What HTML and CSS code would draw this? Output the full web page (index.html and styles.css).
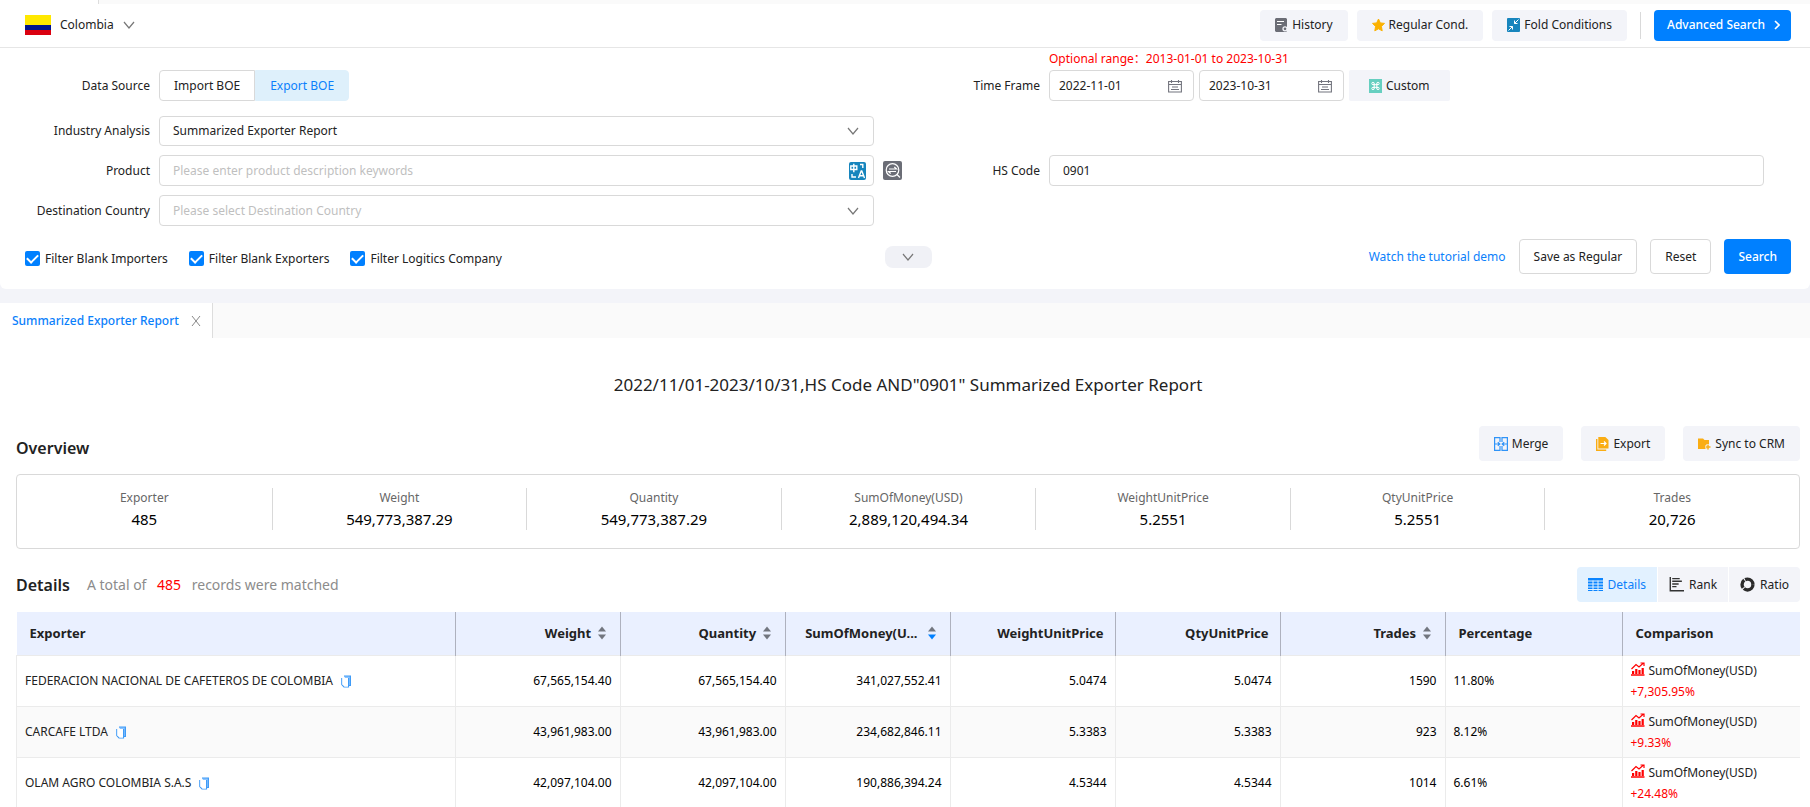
FILE: index.html
```html
<!DOCTYPE html>
<html lang="en">
<head>
<meta charset="utf-8">
<title>Summarized Exporter Report</title>
<link rel="stylesheet" href="styles.css">
</head>
<body>
<svg class="defs" aria-hidden="true">
  <symbol id="chev" viewBox="0 0 12 12"><path d="M1 3l5 6 5-6" fill="none" stroke="#777" stroke-width="1.2"/></symbol>
  <symbol id="cal" viewBox="0 0 14 14"><path d="M.6 2.500h12.800v10.500H.6zM.6 5.500h12.800M3.500 1v3M10.500 1v3M4 8h6M3 10.500h8" fill="none" stroke="#73757e" stroke-width="1.100"/></symbol>
  <symbol id="copy" viewBox="0 0 10 13"><path d="M3 1h6.400v9.500H8z" fill="#8cc4ff"/><path d="M.8 3v6.500L3 12h4.500V3M3 1h6.400v9.500H7.500" fill="none" stroke="#3f9bf7" stroke-width="1.200"/><path d="M1.400 3H7v8.400H3.500L1.400 9.300z" fill="#fff"/></symbol>
  <symbol id="sort" viewBox="0 0 8 14"><path d="M0 5.500l4-5 4 5z" fill="#72767f"/><path d="M0 8.500l4 5 4-5z"/></symbol>
  <symbol id="trend" viewBox="0 0 14 14"><path d="M0 13h13.500" stroke="#f00" stroke-width="1.500"/><path d="M.5 7l4.500-4.500 3 2.500 4.500-4M9.500 1h3.500v3" fill="none" stroke="#f00" stroke-width="1.200"/><path d="M1 9h2.200v3H1zM4.200 7h2.200v5H4.200zM7.400 8h2.200v4H7.400zM10.600 6h2.200v6h-2.200z" fill="#f00"/></symbol>
</svg>

<div class="strip"><div class="strip-tab"></div></div>

<header class="topbar">
  <button class="country" type="button">
    <svg class="flag" viewBox="0 0 26 20"><path fill="#ffe800" d="M0 0h26v10H0z"/><path fill="#00148e" d="M0 10h26v5H0z"/><path fill="#da0010" d="M0 15h26v5H0z"/></svg>
    <span>Colombia</span>
    <svg class="chev"><use href="#chev"/></svg>
  </button>
  <div class="top-actions">
    <button class="soft" type="button"><svg class="ic" viewBox="0 0 13 14"><path fill="#6b6d76" d="M0 1l1-1h10l1 1v12l-1 1H1l-1-1z"/><path d="M2 3.500h7M2 6.500h4.500" stroke="#fff"/><circle cx="10" cy="10.800" r="2" fill="#6b6d76" stroke="#f3f4f9" stroke-width="1.300"/></svg>History</button>
    <button class="soft" type="button"><svg class="ic" viewBox="0 0 13 14"><path fill="#fbb100" stroke="#fbb100" stroke-linejoin="round" d="M6.500 1l1.800 3.900 4.200.5-3.100 3 .8 4.400-3.700-2-3.700 2 .8-4.400-3.100-3 4.200-.5z"/></svg>Regular Cond.</button>
    <button class="soft" type="button"><svg class="ic" viewBox="0 0 13 14"><rect width="13" height="14" rx="1" fill="#1785bd"/><path d="M11.500 1.500l-4 4M7.500 2.500v3h3M1.500 12.500l4-4M2.500 8.500h3v3" fill="none" stroke="#fff"/></svg>Fold Conditions</button>
    <span class="divider"></span>
    <button class="primary advanced" type="button">Advanced Search <svg class="arrow" viewBox="0 0 6 10"><path d="M1 1l4 4-4 4" fill="none" stroke="#fff" stroke-width="1.600"/></svg></button>
  </div>
</header>

<form class="filters" onsubmit="return false">
  <div class="grid">
    <div class="field field-top">
      <span class="label" id="ds">Data Source</span>
      <div class="toggle" role="group" aria-labelledby="ds"><button type="button">Import BOE</button><button type="button" class="on">Export BOE</button></div>
    </div>
    <div class="field field-top">
      <label class="label" for="from">Time Frame</label>
      <div class="dates">
        <span class="hint">Optional range：2013-01-01 to 2023-10-31</span>
        <span class="box date"><input id="from" value="2022-11-01"><svg class="cal"><use href="#cal"/></svg></span>
        <span class="box date"><input aria-label="Time Frame end" value="2023-10-31"><svg class="cal"><use href="#cal"/></svg></span>
        <button class="soft custom" type="button"><svg class="ic" viewBox="0 0 13 14"><rect width="13" height="14" fill="#66cfc0"/><g fill="none" stroke="#fff"><circle cx="4" cy="4.500" r="1.200"/><circle cx="9" cy="4.500" r="1.200"/><circle cx="4" cy="9.500" r="1.200"/><circle cx="9" cy="9.500" r="1.200"/><path d="M5.200 4.500v5M7.800 4.500v5M4 5.700h5M4 8.300h5"/></g></svg>Custom</button>
      </div>
    </div>
    <div class="field wide">
      <label class="label" for="ia">Industry Analysis</label>
      <span class="box low"><select id="ia"><option>Summarized Exporter Report</option></select><svg class="chev"><use href="#chev"/></svg></span>
    </div>
    <div class="field wide">
      <label class="label" for="prod">Product</label>
      <span class="box with-tool"><input id="prod" placeholder="Please enter product description keywords"><svg class="tr" viewBox="0 0 17 18"><rect width="17" height="18" rx="2" fill="#1785bd"/><path d="M1.800 4h6v3.500h-6zM4.800 1.800v8.400M11 2.500h2.800v3.500M3 12v3h4M9.500 16l2.700-7h.6l2.700 7M10.500 13.800h4" fill="none" stroke="#fff" stroke-width="1.400"/></svg></span>
      <button class="lookup" type="button" aria-label="Product lookup"><svg viewBox="0 0 19 19"><rect width="19" height="19" rx="2" fill="#6b6d76"/><circle cx="9.500" cy="9" r="6.300" fill="none" stroke="#fff" stroke-width="1.200"/><path d="M6 8h7.500l-2.200-2M13 10.500H5.500l2.200 2M14 13.500l3 3" fill="none" stroke="#fff" stroke-width="1.200"/></svg></button>
    </div>
    <div class="field">
      <label class="label" for="hs">HS Code</label>
      <span class="box"><input id="hs" value="0901"></span>
    </div>
    <div class="field">
      <label class="label" for="dest">Destination Country</label>
      <span class="box"><select id="dest" class="empty"><option>Please select Destination Country</option></select><svg class="chev"><use href="#chev"/></svg></span>
    </div>
  </div>
  <div class="filter-foot">
    <div class="checks">
      <label><input type="checkbox" checked>Filter Blank Importers</label>
      <label><input type="checkbox" checked>Filter Blank Exporters</label>
      <label><input type="checkbox" checked>Filter Logitics Company</label>
    </div>
    <button class="more" type="button" aria-label="Show more conditions"><svg class="chev"><use href="#chev"/></svg></button>
    <div class="submit">
      <a href="#">Watch the tutorial demo</a>
      <button class="outline" type="button">Save as Regular</button>
      <button class="outline" type="button">Reset</button>
      <button class="primary search" type="submit">Search</button>
    </div>
  </div>
</form>

<nav class="tabs"><div class="tab"><a href="#">Summarized Exporter Report</a><button type="button" aria-label="Close tab"><svg viewBox="0 0 10 10"><path d="M1 0l8 10M9 0L1 10" stroke="#888" fill="none"/></svg></button></div></nav>

<main class="report">
  <h1>2022/11/01-2023/10/31,HS Code AND"0901" Summarized Exporter Report</h1>
  <div class="bar">
    <h2 class="overview">Overview</h2>
    <div class="bar-actions">
      <button class="soft tall" type="button"><svg class="ic wide-ic" viewBox="0 0 14 14"><path d="M6 5V.6H.6v12.800H6V9M8 5V.6h5.400v12.800H8V9M.6 7h5M13.400 7h-5M3.800 5.300L5.800 7l-2 1.700M10.200 5.300L8.200 7l2 1.700" fill="none" stroke="#2f93f8" stroke-width="1.200"/></svg>Merge</button>
      <button class="soft tall" type="button"><svg class="ic" viewBox="0 0 13 14"><path d="M.7 2v11.300h9.500" fill="none" stroke="#faad14" stroke-width="1.400"/><path d="M2.300 0h7L12.500 3v8.500H2.300z" fill="#faad14"/><path d="M4.500 6.500H10M8 4.500l2 2-2 2" fill="none" stroke="#fff" stroke-width="1.200"/></svg>Export</button>
      <button class="soft tall" type="button"><svg class="ic" viewBox="0 0 13 14"><path d="M0 1.500h5L6.500 3H11v9H0z" fill="#faad14"/><path d="M7 10h6M10 7v6" stroke="#f3f4f9" stroke-width="3"/><path d="M7.500 10h5M10 7.500v5" stroke="#faad14" stroke-width="1.500"/></svg>Sync to CRM</button>
    </div>
  </div>
  <dl class="stats">
    <div><dt>Exporter</dt><dd>485</dd></div>
    <div><dt>Weight</dt><dd>549,773,387.29</dd></div>
    <div><dt>Quantity</dt><dd>549,773,387.29</dd></div>
    <div><dt>SumOfMoney(USD)</dt><dd>2,889,120,494.34</dd></div>
    <div><dt>WeightUnitPrice</dt><dd>5.2551</dd></div>
    <div><dt>QtyUnitPrice</dt><dd>5.2551</dd></div>
    <div><dt>Trades</dt><dd>20,726</dd></div>
  </dl>
  <div class="bar details">
    <h2>Details</h2>
    <p>A total of <b>485</b> records were matched</p>
    <div class="views">
      <button type="button" class="on"><svg viewBox="0 0 15 14"><path d="M0 .5h15v13H0z" fill="#0b84ff"/><path d="M0 3.500h15M0 6.500h15M0 9.500h15M0 12h15M5 3v11M10 3v11" stroke="#e2f1ff"/></svg>Details</button>
      <button type="button"><svg viewBox="0 0 14 14"><path d="M1.200 0v12.800H14M3 1.500h7M3 4h9M3 6.500h6M3 9h4" fill="none" stroke="#333" stroke-width="1.300"/></svg>Rank</button>
      <button type="button"><svg viewBox="0 0 16 16"><circle cx="8" cy="8" r="5.800" fill="none" stroke="#2b2b2b" stroke-width="3.600" stroke-dasharray="13 1 9 1 11.400 1"/></svg>Ratio</button>
    </div>
  </div>
  <table>
    <colgroup><col><col class="c-num"><col class="c-num"><col class="c-num"><col class="c-num"><col class="c-num"><col class="c-num"><col class="c-pct"><col class="c-cmp"></colgroup>
    <thead><tr>
      <th>Exporter</th>
      <th class="n s">Weight <svg class="sort"><use href="#sort"/></svg></th>
      <th class="n s">Quantity <svg class="sort"><use href="#sort"/></svg></th>
      <th class="n s">SumOfMoney(U...<svg class="sort desc"><use href="#sort"/></svg></th>
      <th class="n">WeightUnitPrice</th>
      <th class="n">QtyUnitPrice</th>
      <th class="n s">Trades <svg class="sort"><use href="#sort"/></svg></th>
      <th>Percentage</th>
      <th>Comparison</th>
    </tr></thead>
    <tbody>
      <tr><td class="name">FEDERACION NACIONAL DE CAFETEROS DE COLOMBIA<svg class="copy"><use href="#copy"/></svg></td><td class="n">67,565,154.40</td><td class="n">67,565,154.40</td><td class="n">341,027,552.41</td><td class="n">5.0474</td><td class="n">5.0474</td><td class="n">1590</td><td>11.80%</td><td class="cmp"><svg><use href="#trend"/></svg>SumOfMoney(USD)<em>+7,305.95%</em></td></tr>
      <tr><td class="name">CARCAFE LTDA<svg class="copy"><use href="#copy"/></svg></td><td class="n">43,961,983.00</td><td class="n">43,961,983.00</td><td class="n">234,682,846.11</td><td class="n">5.3383</td><td class="n">5.3383</td><td class="n">923</td><td>8.12%</td><td class="cmp"><svg><use href="#trend"/></svg>SumOfMoney(USD)<em>+9.33%</em></td></tr>
      <tr><td class="name">OLAM AGRO COLOMBIA S.A.S<svg class="copy"><use href="#copy"/></svg></td><td class="n">42,097,104.00</td><td class="n">42,097,104.00</td><td class="n">190,886,394.24</td><td class="n">4.5344</td><td class="n">4.5344</td><td class="n">1014</td><td>6.61%</td><td class="cmp"><svg><use href="#trend"/></svg>SumOfMoney(USD)<em>+24.48%</em></td></tr>
    </tbody>
  </table>
</main>
</body>
</html>
```
FILE: styles.css
```css
* { box-sizing: border-box; }
html { background: #fff; scrollbar-width: none; }
body { margin: 0; background: #f3f4f9; color: #222; font: 12px/20px "Noto Sans", "Noto Sans CJK SC", sans-serif; }
button, input, select { font: inherit; color: inherit; margin: 0; }
button { border: 0; background: none; padding: 0; white-space: nowrap; }
a { color: #0b80fb; text-decoration: none; }
svg { display: block; flex: none; }
.defs { position: absolute; width: 0; height: 0; }

.strip { height: 4px; background: #fafafa; }
.strip-tab { width: 99px; height: 4px; background: #fff; border-right: 1px solid #ddd; }

.topbar { display: flex; justify-content: space-between; align-items: center; height: 44px; padding: 1px 19px 2px 25px; background: #fff; border-bottom: 1px solid #e6e6e6; }
.country { display: flex; align-items: center; gap: 9px; }
.flag { width: 26px; height: 20px; }
.chev { width: 12px; height: 12px; }
.top-actions { display: flex; align-items: center; gap: 9px; }
.soft { display: inline-flex; align-items: center; gap: 4px; height: 31px; padding: 0 15px; background: #f3f4f9; border-radius: 4px; }
.ic { width: 13px; height: 14px; }
.wide-ic { width: 14px; }
.divider { width: 1px; height: 27px; margin: 0 4px; background: #d9d9d9; }
.primary { background: #0080ff; color: #fff; border-radius: 4px; }
.advanced { display: flex; align-items: center; gap: 9px; height: 31px; padding: 0 11px 0 13px; font-weight: 500; }
.arrow { width: 6px; height: 10px; }

.filters { background: #fff; border-radius: 0 0 6px 6px; padding: 22px 11px 15px 19px; }
.grid { display: grid; grid-template-columns: 1fr 1fr; row-gap: 9px; }
.field { display: grid; grid-template-columns: 131px 1fr 26px; column-gap: 9px; align-items: center; min-width: 0; }
.field-top { margin-bottom: 6px; }
.wide { grid-column: 1; }
.label { text-align: right; white-space: nowrap; }
.toggle { display: flex; }
.toggle button { height: 31px; padding: 0 14px; border: 1px solid #d9d9d9; border-radius: 4px 0 0 4px; }
.toggle .on { background: #def0fb; border-color: #def0fb; color: #0b80fb; border-radius: 0 4px 4px 0; }
.box { display: flex; align-items: center; height: 31px; padding: 0 14px 0 13px; border: 1px solid #d9d9d9; border-radius: 4px; background: #fff; }
.box input, .box select { flex: 1; width: 100%; min-width: 0; height: 28px; padding: 0; border: 0; outline: 0; background: none; appearance: none; }
.box input::placeholder, .box .empty { color: #bfbfbf; opacity: 1; }
.low { height: 30px; }
.with-tool { padding-right: 7px; }
.dates { position: relative; display: flex; gap: 5px; }
.hint { position: absolute; left: 0; bottom: 32px; color: #f00; white-space: nowrap; }
.date { width: 145px; padding: 0 11px 0 9px; }
.cal { width: 14px; height: 14px; }
.custom { padding: 0 20px; border-radius: 2px; }
.tr { width: 17px; height: 18px; }
.lookup, .lookup svg { width: 19px; height: 19px; }
.filter-foot { display: grid; grid-template-columns: 1fr 47px 1fr; align-items: center; margin: 13px 8px 0 6px; }
.checks { display: flex; gap: 21px; padding-top: 4px; }
.checks label { display: flex; align-items: center; gap: 5px; }
.checks input { appearance: none; display: grid; place-items: center; width: 15px; height: 15px; background: #0080ff; border-radius: 2px; }
.checks input::after { content: ""; width: 9px; height: 5px; border: solid #fff; border-width: 0 0 2px 2px; transform: rotate(-45deg); margin-bottom: 2px; }
.more { display: grid; place-items: center; height: 22px; background: #f0f1f6; border-radius: 8px; }
.submit { display: flex; justify-content: flex-end; align-items: center; gap: 13px; }
.outline { height: 35px; padding: 0 14px; border: 1px solid #d9d9d9; border-radius: 4px; background: #fff; }
.search { height: 35px; padding: 0 14px; font-weight: 500; }

.tabs { margin-top: 14px; height: 35px; background: #fafafa; }
.tab { display: inline-flex; align-items: center; gap: 12px; height: 35px; padding: 0 11px 0 12px; background: #fff; border-right: 1px solid #ddd; font-weight: 500; }
.tab svg { width: 10px; height: 10px; }

.report { background: #fff; padding: 33px 10px 0 16px; }
h1 { margin: 0; text-align: center; font-size: 17px; line-height: 28px; font-weight: 400; }
h2 { margin: 0; font-size: 16px; line-height: 24px; font-weight: 600; }
.overview { padding-top: 8px; }
.bar { display: flex; align-items: center; justify-content: space-between; margin-top: 27px; }
.bar-actions { display: flex; gap: 18px; }
.tall { height: 35px; }
.stats { display: grid; grid-template-columns: repeat(7, 1fr); margin: 13px 0 0; padding: 13px 0 18px; border: 1px solid #d9d9d9; border-radius: 4px; text-align: center; }
.stats > div + div { border-left: 1px solid #d9d9d9; }
.stats dt { color: #666; }
.stats dd { margin: 0; color: #000; font-size: 15px; line-height: 22px; }
.details { justify-content: flex-start; margin-top: 18px; }
.details p { margin: 0 0 0 17px; color: #8c8c8c; font-size: 14px; }
.details b { margin: 0 7px; color: #f00; font-weight: 400; }
.views { display: flex; gap: 1px; margin-left: auto; }
.views button { display: flex; align-items: center; gap: 5px; height: 35px; padding: 0 11px; background: #f3f4f9; }
.views button:last-child { border-radius: 0 4px 4px 0; }
.views svg { width: 15px; height: 15px; }
.views .on { background: #e2f1ff; color: #0b80fb; border-radius: 4px 0 0 4px; }

table { width: 100%; margin-top: 10px; border-collapse: collapse; table-layout: fixed; }
.c-num { width: 165px; }
.c-pct { width: 177px; }
.c-cmp { width: 178px; }
th { height: 43px; padding: 0 13px; background: #eaf0ff; text-align: left; font-weight: 700; font-size: 13px; white-space: nowrap; border-right: 1px solid #aeb1be; }
th:last-child { border-right: 0; }
.n { text-align: right; }
th.n { padding: 0 11px 0 0; }
th.s { padding-right: 14px; }
.sort { display: inline-block; width: 8px; height: 14px; margin-left: 3px; vertical-align: -2px; fill: #72767f; }
.desc { fill: #0080ff; margin-left: 10px; }
td { height: 51px; padding: 0 8px; border: 1px solid #ebebeb; color: #000; }
td:last-child { border-right: 0; }
tbody tr:nth-child(even) { background: #fafafa; }
td.name, td.cmp { color: #222; }
.copy { display: inline-block; width: 10px; height: 13px; margin-left: 8px; vertical-align: -3px; }
.cmp { line-height: 21px; }
.cmp svg { display: inline-block; width: 14px; height: 14px; margin-right: 4px; vertical-align: -1px; }
.cmp em { display: block; color: #f00; font-style: normal; }
```
